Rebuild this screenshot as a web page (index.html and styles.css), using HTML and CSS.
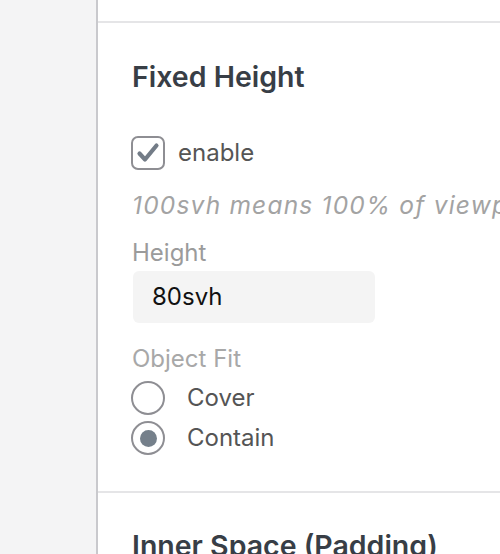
FILE: index.html
```html
<!DOCTYPE html>
<html>
<head>
<meta charset="utf-8">
<link rel="stylesheet" href="styles.css">
</head>
<body>
<div class="layout">
  <aside class="sidebar"></aside>
  <main class="panel">
    <div class="top-spacer"></div>
    <section class="section">
      <h2 class="section-title">Fixed Height</h2>
      <label class="check-row">
        <span class="checkbox">
          <svg width="30" height="30" viewBox="0 0 30 30"><path d="M6.5 15.5 L12 21.5 L23.5 7.5" fill="none" stroke="#737c87" stroke-width="4.2" stroke-linecap="round" stroke-linejoin="round"/></svg>
        </span>
        <span class="check-label">enable</span>
      </label>
      <p class="hint">100svh means 100% of viewport height</p>
      <div class="field-label">Height</div>
      <div class="input">80svh</div>
      <div class="field-label fit-label">Object Fit</div>
      <div class="radio-row"><span class="radio"></span><span class="radio-label">Cover</span></div>
      <div class="radio-row second"><span class="radio checked"></span><span class="radio-label">Contain</span></div>
    </section>
    <section class="section next">
      <h2 class="section-title">Inner Space (Padding)</h2>
    </section>
  </main>
</div>
</body>
</html>
```
FILE: styles.css
```css
html, body {
  margin: 0;
  padding: 0;
  height: 100%;
  overflow: hidden;
}
body {
  font-family: Inter, "Liberation Sans", sans-serif;
  background: #fff;
}
.layout {
  display: flex;
  height: 554px;
}
.sidebar {
  width: 96px;
  flex: none;
  background: #f4f4f5;
  border-right: 2px solid #c9c9cd;
}
.panel {
  flex: 1;
  min-width: 0;
  overflow: hidden;
  background: #fff;
}
.top-spacer {
  height: 21px;
}
.section {
  border-top: 2px solid #e5e5e7;
  padding: 38px 0 36px 34px;
  display: flex;
  flex-direction: column;
  align-items: flex-start;
  white-space: nowrap;
}
.section.next {
  padding-top: 37px;
}
.section-title {
  margin: 0;
  font-size: 28.5px;
  line-height: 32px;
  font-weight: 600;
  color: #383e46;
}
.check-row {
  margin-top: 43px;
  display: flex;
  align-items: center;
  height: 34px;
  margin-left: -1px;
}
.checkbox {
  width: 30px;
  height: 30px;
  border: 2px solid #8e8e93;
  border-radius: 7px;
  display: flex;
}
.check-label {
  margin-left: 13px;
  font-size: 24px;
  line-height: 34px;
  color: #555;
}
.hint {
  margin: 20px 0 0;
  font-size: 24.5px;
  letter-spacing: 1.2px;
  line-height: 30px;
  font-style: italic;
  color: #a3a3a3;
}
.field-label {
  margin-top: 18px;
  font-size: 24px;
  line-height: 30px;
  color: #9b9b9b;
}
.input {
  margin-top: 3px;
  margin-left: 1px;
  width: 223px;
  height: 52px;
  padding-left: 19px;
  box-sizing: content-box;
  background: #f4f4f4;
  border-radius: 6px;
  font-size: 24px;
  line-height: 52px;
  color: #111;
}
.fit-label {
  margin-top: 21px;
  color: #a8a8a8;
}
.radio-row {
  margin-top: 7px;
  display: flex;
  align-items: center;
  height: 34px;
  margin-left: -1px;
}
.radio-row.second {
  margin-top: 6px;
}
.radio {
  width: 30px;
  height: 30px;
  border: 2px solid #8e8e93;
  border-radius: 50%;
  display: flex;
  align-items: center;
  justify-content: center;
}
.radio.checked::after {
  content: "";
  width: 17px;
  height: 17px;
  border-radius: 50%;
  background: #75808b;
}
.radio-label {
  margin-left: 22px;
  font-size: 24px;
  line-height: 34px;
  color: #555;
}
```
